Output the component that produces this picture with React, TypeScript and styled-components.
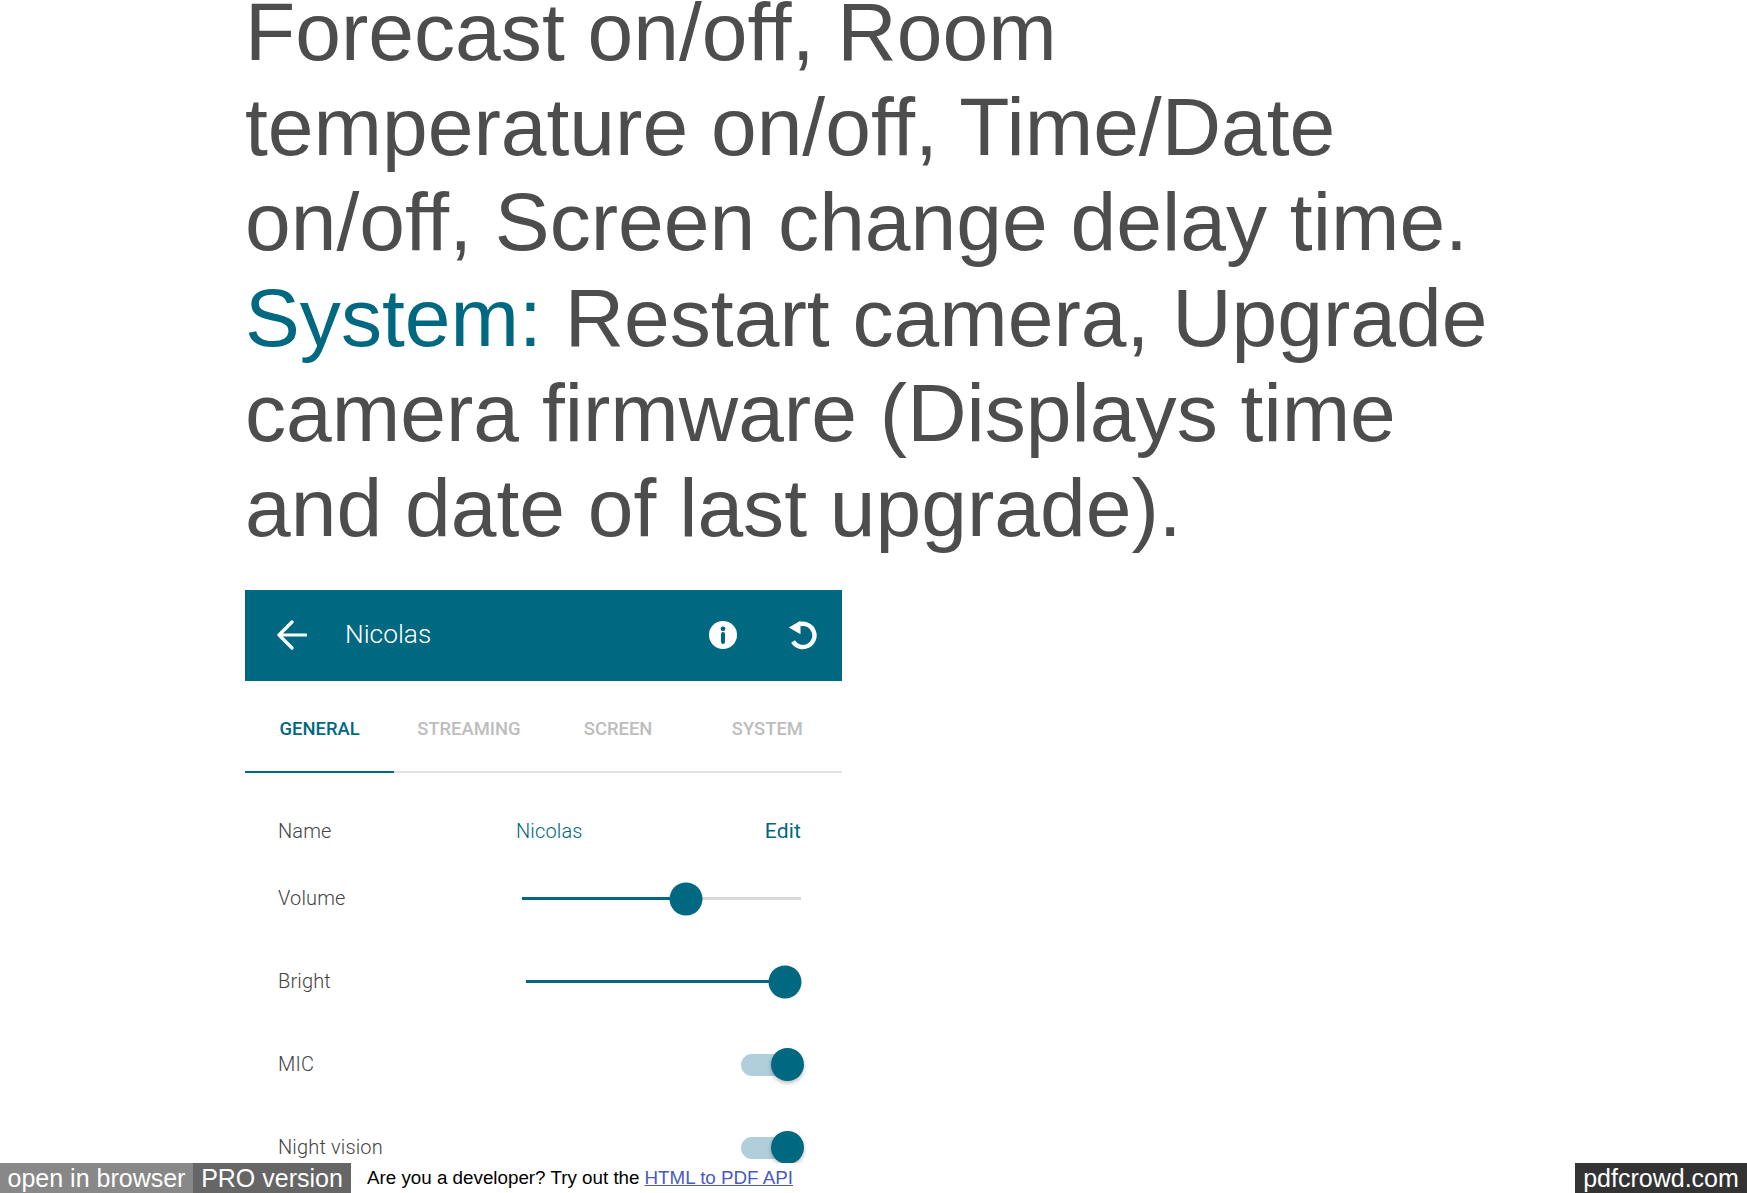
import styled, { createGlobalStyle } from 'styled-components'

const TEAL = '#006880'

const GlobalStyle = createGlobalStyle`
  html, body {
    margin: 0;
    padding: 0;
    background: #fff;
  }
`

const Page = styled.div`
  position: relative;
  width: 1747px;
  height: 1193px;
  overflow: hidden;
  padding-left: 245px;
  box-sizing: border-box;
`

const Description = styled.div`
  width: 1262px;
  margin-top: -16px;
  font-family: 'Liberation Sans', Arial, sans-serif;
  font-size: 82.2px;
  line-height: 95.2px;
  color: #4d4d4d;

  p {
    margin: 0;
  }

  span {
    color: ${TEAL};
  }
`

const Panel = styled.div`
  width: 597px;
  margin-top: 35px;
  font-family: Roboto, sans-serif;
`

const Header = styled.div`
  display: flex;
  align-items: center;
  height: 91px;
  padding: 0 24px 2px 32px;
  box-sizing: border-box;
  background: ${TEAL};
  color: #fff;

  .title {
    margin: 0 0 1px 38px;
    flex: 1;
    font-size: 26.3px;
    font-weight: 300;
  }

  .info {
    margin-right: 50px;
  }
`

const Tabs = styled.div`
  display: grid;
  grid-template-columns: repeat(4, 1fr);
  height: 92px;
  box-sizing: border-box;
  border-bottom: 2px solid #e2e2e2;
`

const Tab = styled.div<{ $active?: boolean }>`
  display: flex;
  align-items: center;
  justify-content: center;
  margin-bottom: -2px;
  padding-top: 4px;
  font-size: 18.4px;
  font-weight: 500;
  color: ${(p) => (p.$active ? TEAL : '#bdbdbd')};
  border-bottom: 2px solid ${(p) => (p.$active ? TEAL : 'transparent')};
`

const Rows = styled.div`
  padding: 33px 41px 0 33px;
`

const Row = styled.div<{ $height?: number }>`
  display: flex;
  align-items: center;
  justify-content: space-between;
  height: ${(p) => p.$height ?? 83}px;
  font-size: 20px;
  font-weight: 300;
  letter-spacing: 0.15px;
  color: #444;
`

const Label = styled.div`
  margin-bottom: 2px;
`

const NameValue = styled.div`
  display: grid;
  grid-template-columns: 238px 1fr auto;
  width: 100%;
  margin-bottom: 2px;
  color: ${TEAL};

  .label {
    color: #444;
  }

  .edit {
    font-size: 21px;
    font-weight: 400;
  }
`

const Track = styled.div<{ $width: number }>`
  position: relative;
  width: ${(p) => p.$width}px;
  height: 3px;
  background: #d8d8d8;
`

const Fill = styled.div`
  height: 100%;
  background: ${TEAL};
`

const Thumb = styled.div`
  position: absolute;
  top: 50%;
  width: 33px;
  height: 33px;
  border-radius: 50%;
  background: ${TEAL};
  transform: translate(-50%, -50%);
`

const Switch = styled.div`
  position: relative;
  width: 54px;
  height: 22px;
  margin-right: 6px;
  border-radius: 11px;
  background: #b0cfda;
`

const SwitchThumb = styled.div`
  position: absolute;
  top: -5.5px;
  right: -9px;
  width: 33px;
  height: 33px;
  border-radius: 50%;
  background: ${TEAL};
  box-shadow: 0 2px 4px rgba(0, 0, 0, 0.28);
`

const Footer = styled.div`
  position: absolute;
  left: 0;
  right: 0;
  bottom: 0;
  display: flex;
  align-items: stretch;
  height: 30px;
  background: #fff;
  font-family: 'Liberation Sans', Arial, sans-serif;
`

const FooterButton = styled.div<{ $bg: string; $width: number }>`
  display: flex;
  align-items: center;
  justify-content: center;
  width: ${(p) => p.$width}px;
  background: ${(p) => p.$bg};
  color: #fff;
  font-size: 25px;
`

const Promo = styled.div`
  display: flex;
  align-items: center;
  flex: 1;
  margin-left: 16px;
  color: #000;
  font-size: 18.8px;

  a {
    margin-left: 5px;
    color: #4a5ac0;
    text-decoration: underline;
  }
`

function Slider({ width, value }: { width: number; value: number }) {
  return (
    <Track $width={width}>
      <Fill style={{ width: `${value}%` }} />
      <Thumb style={{ left: `${value}%` }} />
    </Track>
  )
}

export default function App() {
  return (
    <Page>
      <GlobalStyle />
      <Description>
        <p>Forecast on/off, Room temperature on/off, Time/Date on/off, Screen change delay time.</p>
        <p>
          <span>System:</span> Restart camera, Upgrade camera firmware (Displays time and date of last upgrade).
        </p>
      </Description>
      <Panel>
        <Header>
          <svg width="30" height="30" viewBox="0 0 30 30" fill="none" stroke="#fff" strokeWidth="3.2" strokeLinecap="round" strokeLinejoin="round">
            <path d="M29 15H2M15 2 2 15l13 13" />
          </svg>
          <div className="title">Nicolas</div>
          <svg className="info" width="30" height="30" viewBox="0 0 30 30">
            <circle cx="15" cy="15" r="14" fill="#fff" />
            <circle cx="15" cy="8.8" r="2.4" fill={TEAL} />
            <path d="M15 14v8" stroke={TEAL} strokeWidth="4" strokeLinecap="round" />
          </svg>
          <svg width="30" height="30" viewBox="0 0 30 30" fill="none">
            <path d="M5 21.5A11.6 11.6 0 1 0 12 4.2" stroke="#fff" strokeWidth="4.4" />
            <path d="M12.5 0.8 0.8 7.5l11.7 6.7z" fill="#fff" />
          </svg>
        </Header>
        <Tabs>
          <Tab $active>GENERAL</Tab>
          <Tab>STREAMING</Tab>
          <Tab>SCREEN</Tab>
          <Tab>SYSTEM</Tab>
        </Tabs>
        <Rows>
          <Row $height={51}>
            <NameValue>
              <div className="label">Name</div>
              <div>Nicolas</div>
              <div className="edit">Edit</div>
            </NameValue>
          </Row>
          <Row>
            <Label>Volume</Label>
            <Slider width={279} value={58.8} />
          </Row>
          <Row>
            <Label>Bright</Label>
            <Slider width={275} value={94} />
          </Row>
          <Row>
            <Label>MIC</Label>
            <Switch>
              <SwitchThumb />
            </Switch>
          </Row>
          <Row>
            <Label>Night vision</Label>
            <Switch>
              <SwitchThumb />
            </Switch>
          </Row>
        </Rows>
      </Panel>
      <Footer>
        <FooterButton $bg="#888" $width={193}>open in browser</FooterButton>
        <FooterButton $bg="#666" $width={158}>PRO version</FooterButton>
        <Promo>
          Are you a developer? Try out the <a href="#">HTML to PDF API</a>
        </Promo>
        <FooterButton $bg="#333" $width={172}>pdfcrowd.com</FooterButton>
      </Footer>
    </Page>
  )
}
